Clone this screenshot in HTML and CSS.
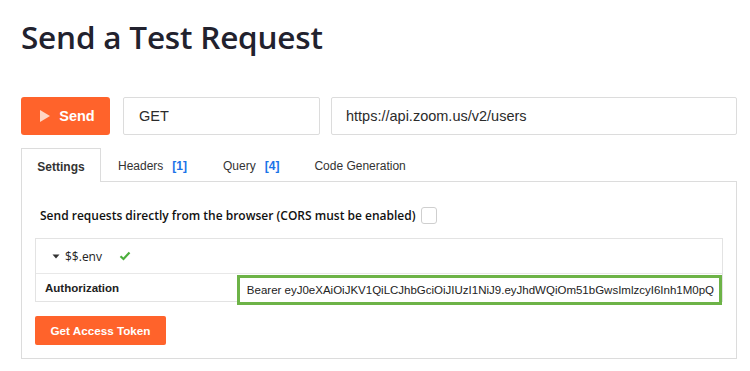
FILE: index.html
```html
<!DOCTYPE html>
<html>
<head>
<meta charset="utf-8">
<link rel="stylesheet" href="styles.css">
</head>
<body>
<div class="page">
  <h1 class="title">Send a Test Request</h1>
  <div class="request-row">
    <button class="btn-send"><svg class="play" width="12" height="14" viewBox="0 0 12 14"><path d="M1 1 L11 7 L1 13 Z" fill="#ffd6c4"/></svg>Send</button>
    <div class="field field-method">GET</div>
    <div class="field field-url">https://api.zoom.us/v2/users</div>
  </div>
  <div class="tabs">
    <div class="tab active">Settings</div>
    <div class="tab">Headers <span class="count">[1]</span></div>
    <div class="tab">Query <span class="count">[4]</span></div>
    <div class="tab">Code Generation</div>
  </div>
  <div class="panel">
    <div class="cors">Send requests directly from the browser (CORS must be enabled) <span class="checkbox"></span></div>
    <div class="env">
      <div class="env-head">
        <svg class="caret" width="8" height="5" viewBox="0 0 8 5"><path d="M0.5 0.5 L7.5 0.5 L4 4.5 Z" fill="#333"/></svg>
        <span class="env-name">$$.env</span>
        <svg class="check" width="12" height="10" viewBox="0 0 12 10"><path d="M1.5 5.2 L4.5 8 L10.5 1.5" fill="none" stroke="#4cae3c" stroke-width="2.2"/></svg>
      </div>
      <div class="env-row">
        <div class="env-key">Authorization</div>
        <div class="env-value">Bearer eyJ0eXAiOiJKV1QiLCJhbGciOiJIUzI1NiJ9.eyJhdWQiOm51bGwsImlzcyI6Inh1M0pQ</div>
      </div>
    </div>
    <button class="btn-token">Get Access Token</button>
  </div>
</div>
</body>
</html>
```
FILE: styles.css
```css
* { box-sizing: border-box; }
html, body { margin: 0; padding: 0; background: #fff; }
body { font-family: "Liberation Sans", Arial, sans-serif; color: #222; }
.page { padding: 0 14px 0 21px; width: 751px; }
.title {
  font-family: "Open Sans", sans-serif;
  font-weight: 600;
  font-size: 31.5px;
  color: #22222e;
  margin: 0;
  padding-top: 14px;
  line-height: 46px;
  letter-spacing: -0.2px;
}
.request-row { display: flex; gap: 12px; margin-top: 37px; height: 38px; }
.btn-send {
  width: 89px; height: 38px;
  background: #ff632b; color: #fff; border: none; border-radius: 3px;
  font-family: "Liberation Sans", Arial, sans-serif; font-weight: 700; font-size: 14.5px;
  display: flex; align-items: center; justify-content: center; gap: 8px;
  padding: 0 0 0 3px;
}
.field {
  border: 1px solid #dcdcdc; border-radius: 2px;
  height: 38px; display: flex; align-items: center;
  padding-left: 15px; font-size: 14.5px; color: #2b2b2b;
}
.field-method { width: 197px; margin-left: 1px; }
.field-url { width: 406px; margin-left: -1px; padding-left: 14px; }
.tabs { display: flex; margin-top: 13px; height: 33px; }
.tab {
  font-size: 12px; color: #333; padding: 3px 17px 0 17px; height: 33px;
  display: flex; align-items: center; gap: 9px;
}
.tab.active {
  font-weight: 700; border: 1px solid #dcdcdc; border-bottom: none; background: #fff;
  width: 80px; justify-content: center; position: relative; z-index: 1; height: 34px;
}
.tab:nth-child(2) { padding-left: 17px; padding-right: 22px; }
.tab:nth-child(3) { padding-left: 14px; padding-right: 18px; }
.count { color: #1a73e8; font-weight: 700; }
.panel {
  border: 1px solid #dcdcdc; width: 716px; height: 178px;
  padding: 24px 13px 13px 13px;
}
.cors {
  font-family: "Open Sans", sans-serif; font-weight: 600; font-size: 12px; color: #111;
  padding-left: 5px; display: flex; align-items: center; gap: 5px; height: 18px;
}
.checkbox {
  display: inline-block; width: 16px; height: 17px; border: 1px solid #cfcfcf; border-radius: 3px;
}
.env { border: 1px solid #e3e3e3; margin-top: 14px; width: 688px; height: 64px; }
.env-head {
  height: 35px; display: flex; align-items: center; padding-left: 16px;
  border-bottom: 1px solid #e8e8e8;
}
.caret { margin-right: 5px; }
.env-name { font-family: "Open Sans", sans-serif; font-size: 12px; color: #222; }
.check { margin-left: 17px; }
.env-row { display: flex; height: 28px; align-items: center; }
.env-key {
  width: 202px; padding-left: 9px; font-weight: 700; font-size: 11.5px; color: #222;
  font-family: "Liberation Sans", Arial, sans-serif;
}
.env-value {
  width: 488px; height: 30px; margin-top: 3px;
  border: 3px solid #6db347; background: #fff;
  font-size: 11.5px; color: #222; display: flex; align-items: center; padding-left: 7px;
  white-space: nowrap; overflow: hidden; position: relative;
}
.btn-token {
  margin-top: 14px; width: 131px; height: 29px;
  background: #ff632b; color: #fff; border: none; border-radius: 2px;
  font-family: "Liberation Sans", Arial, sans-serif; font-weight: 700; font-size: 11.7px;
  padding: 0;
}
```
